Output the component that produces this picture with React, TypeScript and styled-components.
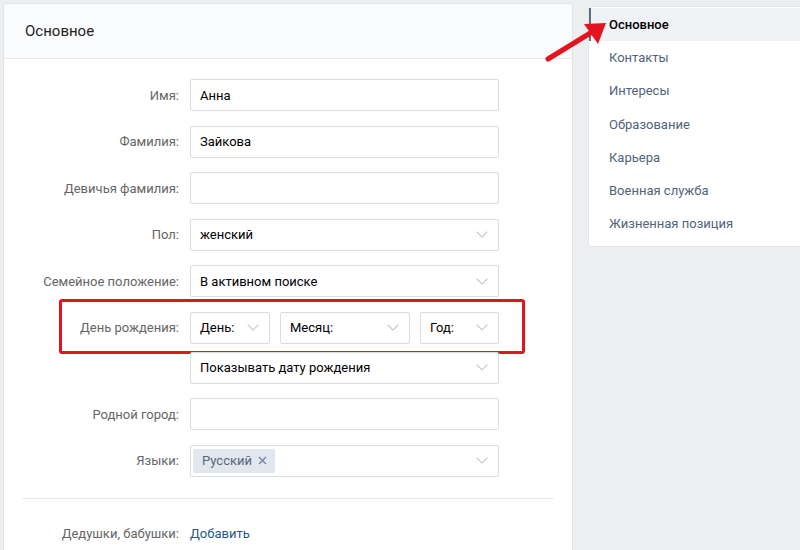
import * as React from 'react';
import styled, { createGlobalStyle } from 'styled-components';

const GlobalStyle = createGlobalStyle`
  html, body {
    margin: 0;
    padding: 0;
    background: #edeef0;
    font-family: Roboto, "Liberation Sans", Arial, sans-serif;
    -webkit-font-smoothing: antialiased;
  }
`;

const Page = styled.div`
  position: relative;
  display: flex;
  align-items: flex-start;
  gap: 15px;
  width: 800px;
  height: 550px;
  overflow: hidden;
  padding: 3px 0 0 3px;
  box-sizing: border-box;
`;

const Card = styled.div`
  background: #fff;
  border: 1px solid #e3e4e8;
  border-radius: 4px;
  box-sizing: border-box;
`;

const MainCard = styled(Card)`
  width: 570px;
  height: 600px;
  flex-shrink: 0;
`;

const CardHeader = styled.div`
  height: 54px;
  display: flex;
  align-items: center;
  padding-left: 21px;
  background: #fafbfc;
  border-bottom: 1px solid #e7e8ec;
  font-size: 15px;
  color: #222;
  border-radius: 4px 4px 0 0;
`;

const Form = styled.div`
  display: flex;
  flex-direction: column;
  padding-top: 20px;
`;

const Row = styled.div<{ $gap?: number }>`
  position: relative;
  display: grid;
  grid-template-columns: 175px 309px;
  column-gap: 11px;
  align-items: center;
  margin-bottom: ${(p) => (p.$gap ?? 14.5)}px;
`;

const Label = styled.div`
  text-align: right;
  font-size: 13px;
  color: #656565;
`;

const Field = styled.div`
  height: 32px;
  box-sizing: border-box;
  border: 1px solid #d8dde3;
  border-radius: 2px;
  background: #fff;
  display: flex;
  align-items: center;
  padding: 0 10px 0 9px;
  font-size: 13px;
  color: #000;
  gap: 8px;
`;

const FieldText = styled.span`
  flex: 1;
  white-space: nowrap;
`;

const DateGroup = styled.div`
  display: grid;
  grid-template-columns: 80px 130px 79px;
  column-gap: 10px;
`;

const Highlight = styled.div`
  position: absolute;
  left: 55px;
  top: -13px;
  width: 466px;
  height: 55px;
  border: 3px solid #e3141f;
  border-radius: 3px;
  box-sizing: border-box;
  pointer-events: none;
`;

const Tag = styled.span`
  display: inline-flex;
  align-items: center;
  gap: 6px;
  height: 24px;
  padding: 0 8px 0 9px;
  margin-left: -7px;
  background: #e1e7ee;
  border-radius: 2px;
  color: #55677d;
  font-size: 13px;
`;

const Divider = styled.div`
  height: 1px;
  background: #e7e8ec;
  margin: 21px 18px 27px 18px;
`;

const LinkText = styled.span`
  font-size: 13px;
  color: #2a5885;
`;

const MenuCard = styled(Card)`
  width: 214px;
  margin-top: 3px;
  padding: 1px 0 6px;
  border-right: none;
  border-radius: 4px 0 0 4px;
`;

const MenuItem = styled.div<{ $active?: boolean }>`
  height: 33.2px;
  display: flex;
  align-items: center;
  padding-left: ${(p) => (p.$active ? 18 : 20)}px;
  font-size: 13px;
  color: ${(p) => (p.$active ? '#000' : '#4f6479')};
  font-weight: ${(p) => (p.$active ? 500 : 400)};
  background: ${(p) => (p.$active ? '#f0f2f5' : 'transparent')};
  border-left: ${(p) => (p.$active ? '2px solid #5f6f82' : 'none')};
`;

const Arrow = styled.svg`
  position: absolute;
  left: 540px;
  top: 16px;
  pointer-events: none;
`;

const Chevron = () => (
  <svg width="12" height="7" viewBox="0 0 12 7" fill="none">
    <path d="M1 1l5 5 5-5" stroke="#c2cad3" strokeWidth="1.1" strokeLinecap="round" strokeLinejoin="round" />
  </svg>
);

const Select = ({ value }: { value: string }) => (
  <Field>
    <FieldText>{value}</FieldText>
    <Chevron />
  </Field>
);

const menu = ['Основное', 'Контакты', 'Интересы', 'Образование', 'Карьера', 'Военная служба', 'Жизненная позиция'];

export default function App() {
  return (
    <>
      <GlobalStyle />
      <Page>
        <MainCard>
          <CardHeader>Основное</CardHeader>
          <Form>
            <Row>
              <Label>Имя:</Label>
              <Field>Анна</Field>
            </Row>
            <Row>
              <Label>Фамилия:</Label>
              <Field>Зайкова</Field>
            </Row>
            <Row>
              <Label>Девичья фамилия:</Label>
              <Field />
            </Row>
            <Row>
              <Label>Пол:</Label>
              <Select value="женский" />
            </Row>
            <Row>
              <Label>Семейное положение:</Label>
              <Select value="В активном поиске" />
            </Row>
            <Row $gap={8}>
              <Label>День рождения:</Label>
              <DateGroup>
                <Select value="День:" />
                <Select value="Месяц:" />
                <Select value="Год:" />
              </DateGroup>
              <Highlight />
            </Row>
            <Row>
              <Label />
              <Select value="Показывать дату рождения" />
            </Row>
            <Row>
              <Label>Родной город:</Label>
              <Field />
            </Row>
            <Row $gap={0}>
              <Label>Языки:</Label>
              <Field>
                <FieldText>
                  <Tag>
                    Русский
                    <svg width="9" height="9" viewBox="0 0 9 9">
                      <path d="M1 1l7 7M8 1l-7 7" stroke="#6f8399" strokeWidth="1.3" />
                    </svg>
                  </Tag>
                </FieldText>
                <Chevron />
              </Field>
            </Row>
            <Divider />
            <Row>
              <Label>Дедушки, бабушки:</Label>
              <LinkText>Добавить</LinkText>
            </Row>
          </Form>
        </MainCard>
        <MenuCard>
          {menu.map((m, i) => (
            <MenuItem key={m} $active={i === 0}>
              {m}
            </MenuItem>
          ))}
        </MenuCard>
        <Arrow width="80" height="60" viewBox="0 0 80 60">
          <path d="M8 43 L52 16" stroke="#e3141f" strokeWidth="5" strokeLinecap="round" />
          <path d="M66 7 L44 8 L58 28 Z" fill="#e3141f" />
        </Arrow>
      </Page>
    </>
  );
}
